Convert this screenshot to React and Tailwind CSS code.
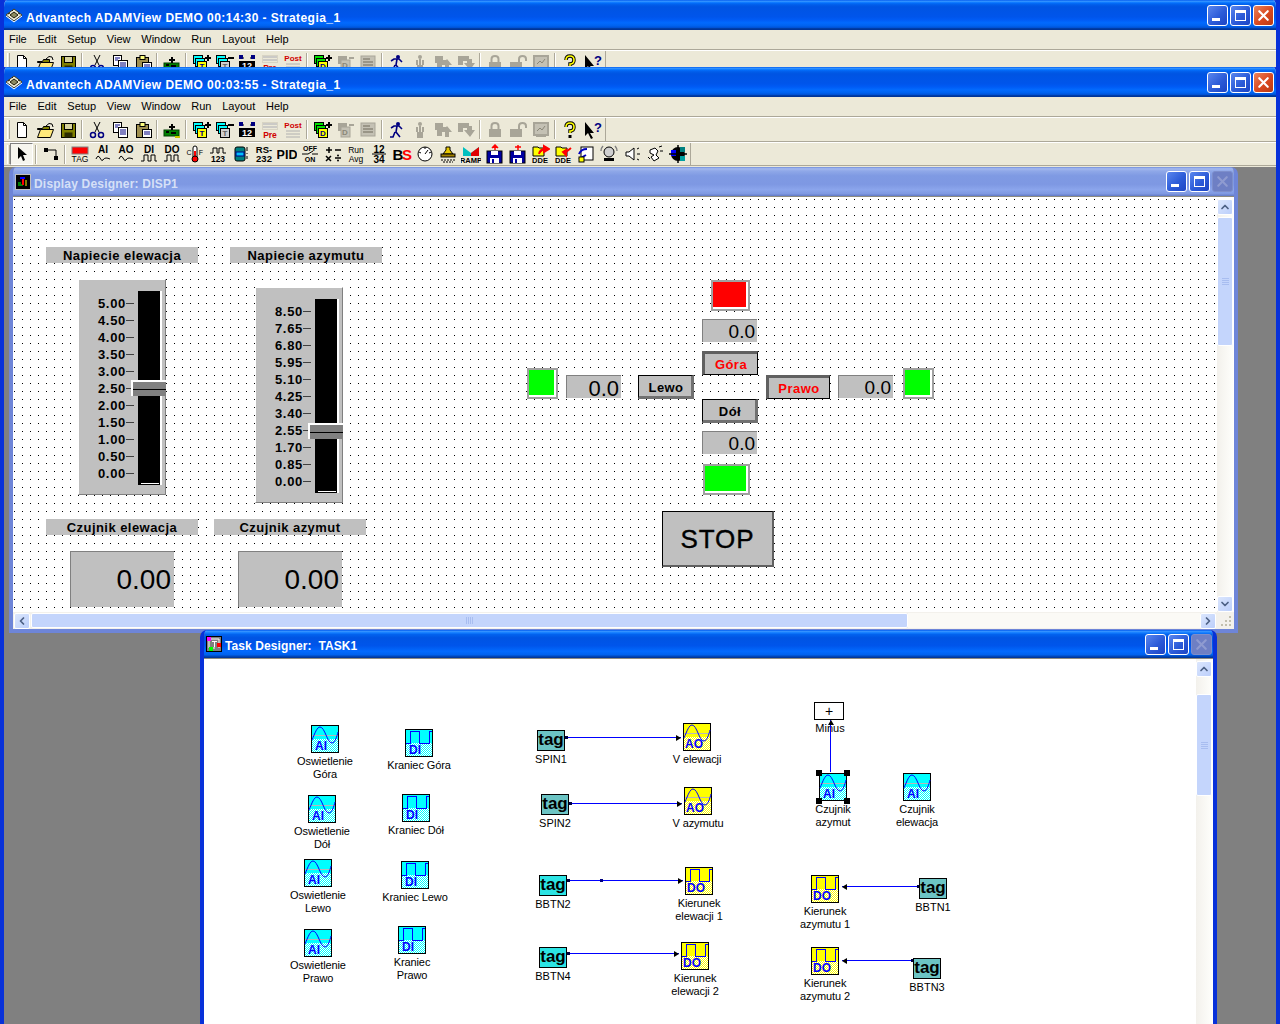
import { ChevronUp, ChevronDown, ChevronLeft, ChevronRight, X } from 'lucide-react'

const sans = '"Liberation Sans", Arial, sans-serif'

// small helpers for toolbar pictures
const Ico = ({ children }) => (
  <svg width="20" height="20" viewBox="0 0 20 20" className="block shrink-0">{children}</svg>
)
const T = ({ x = 10, y, s = 8, c = '#000', w = 700, a = 'middle', children }) => (
  <text x={x} y={y} fontSize={s} fill={c} fontWeight={w} textAnchor={a} fontFamily={sans}>{children}</text>
)
const Wave = ({ y = 15 }) => <path d={`M3 ${y}q2-5 4-1t3 2 3-2 4 1`} fill="none" stroke="#000" />
const Pulse = () => <path d="M2 17h3v-6h4v6h3v-6h4v6h2" fill="none" stroke="#000" />
const Gray = '#a8a598'

const Stack = ({ l, c = '#00ffff', box = '#ffff00', sign = 'plus' }) => (
  <Ico>
    <rect x="2.5" y="2.5" width="9" height="8" fill={c} stroke="#000" />
    <rect x="4.5" y="5.5" width="9" height="8" fill={c} stroke="#000" />
    <rect x="6.5" y="8.5" width="9" height="9" fill={box} stroke="#000" />
    <T x={11} y={16} s={8} c={box === '#ffff00' ? '#000080' : '#606060'}>{l}</T>
    <path d={sign === 'plus' ? 'M14 5h6M17 2v6' : 'M14 5h6'} stroke="#000" strokeWidth="2" />
  </Ico>
)
const Dde = ({ down }) => (
  <Ico>
    <path d="M3 3h5l1 1h5v8H3z" fill="#ffff00" stroke="#000" />
    <path d={down ? 'M18 4l-5 4h-3M10 8l3-2v5z' : 'M9 10q1-5 6-5M14 2l5 3-5 3z'} fill={down ? 'none' : '#ff0000'} stroke="#ff0000" strokeWidth="2" />
    <T y={19} s={7.5}>DDE</T>
  </Ico>
)
const Disk = ({ mark }) => (
  <Ico>
    <rect x="3" y="7" width="15" height="12" fill="#0000a0" stroke="#000" />
    <rect x="6" y="14" width="9" height="5" fill="#ffffff" />
    <rect x="8" y="15" width="2" height="4" fill="#0000a0" />
    <rect x="7" y="7" width="7" height="4" fill="#ffffff" />
    <path d={mark} fill="#ff0000" stroke="#ff0000" strokeWidth="1.5" />
  </Ico>
)

const icons = {
  new: <Ico><path d="M5.5 2.5h6l3 3v12h-9z" fill="#fff" stroke="#000" /><path d="M11.5 2.5v3h3" fill="none" stroke="#000" /></Ico>,
  open: <Ico><path d="M2.5 8.5h5l1-2h6v3h-12z" fill="#808000" stroke="#000" /><path d="M2.5 17.5l3-8h13l-3 8z" fill="#ffe97a" stroke="#000" /><path d="M11 6q3-4 6-2l1 3" fill="none" stroke="#000" /></Ico>,
  save: <Ico><rect x="3.5" y="3.5" width="14" height="14" fill="#808000" stroke="#000" /><rect x="6.5" y="3.5" width="8" height="6" fill="#d8d4a0" stroke="#000" /><rect x="6.5" y="12.5" width="8" height="5" fill="#2b2b00" /></Ico>,
  cut: <Ico><path d="M7 2l5 10M13 2L8 12" stroke="#000" fill="none" /><circle cx="6" cy="15" r="2.5" fill="none" stroke="#000080" strokeWidth="1.5" /><circle cx="14" cy="15" r="2.5" fill="none" stroke="#000080" strokeWidth="1.5" /></Ico>,
  copy: <Ico><rect x="3.5" y="2.5" width="8" height="10" fill="#fff" stroke="#000" /><rect x="8.5" y="7.5" width="9" height="10" fill="#fff" stroke="#000" /><path d="M5 5h5M5 7h3M10 10h6M10 12h6M10 14h6" stroke="#000080" /></Ico>,
  paste: <Ico><rect x="3.5" y="4.5" width="12" height="13" fill="#a09050" stroke="#000" /><rect x="7" y="2.5" width="5" height="4" fill="#ffff80" stroke="#000" /><rect x="9.5" y="9.5" width="9" height="8" fill="#fff" stroke="#000" /><path d="M11 12h6M11 14h6" stroke="#000080" /></Ico>,
  board: <Ico><rect x="2" y="10" width="15" height="6" fill="#008000" stroke="#004000" /><path d="M4 12h3M9 13h5" stroke="#000" strokeWidth="2" /><rect x="13" y="16" width="5" height="2" fill="#c8c800" /><path d="M7 7h6M10 4v6" stroke="#000" strokeWidth="2" /></Ico>,
  tplus: <Stack l="T" />,
  tminus: <Stack l="T" box="#d0d0d0" sign="minus" />,
  count: <Ico><path d="M2 5h5M13 5h5" stroke="#000" /><rect x="2" y="2" width="4" height="4" fill="#000080" /><rect x="14" y="2" width="4" height="4" fill="#000080" /><rect x="2" y="8" width="16" height="9" fill="#000" /><T y={16} s={9} c="#fff">12</T></Ico>,
  pre: <Ico><path d="M3 4h14M3 7h14" stroke="#c0c0c0" strokeWidth="1.5" /><rect x="2.5" y="2.5" width="15" height="7" fill="none" stroke="#d8d4c4" /><T y={18} s={8.5} c="#d00000">Pre</T></Ico>,
  post: <Ico><T y={8} s={8} c="#d00000">Post</T><path d="M3 11h14M3 14h14M3 17h14" stroke="#b0b0b0" /></Ico>,
  dplus: <Stack l="D" c="#00e000" />,
  dminus: <Ico><rect x="3" y="3" width="9" height="8" fill={Gray} /><rect x="6" y="7" width="9" height="10" fill="#c4c1b4" stroke={Gray} /><T x={10} y={15} s={8} c="#8a8778">D</T><path d="M14 5h5" stroke={Gray} strokeWidth="2" /></Ico>,
  dis: <Ico><rect x="3" y="3" width="14" height="13" fill="#c4c1b4" stroke={Gray} /><path d="M5 6h7M5 9h10M5 12h10" stroke="#8a8778" strokeWidth="1.5" /></Ico>,
  run: <Ico><circle cx="11" cy="4" r="2" fill="#000080" /><path d="M4 8l3-2h5l3 3M10 6l-1 6 4 5M8 12l-2 5H3" fill="none" stroke="#000080" strokeWidth="1.6" /></Ico>,
  man: <Ico><circle cx="10" cy="4" r="2" fill={Gray} /><path d="M10 6v12M7 7v5M13 7v5M8 18v-6M12 18v-6" stroke={Gray} strokeWidth="2" /></Ico>,
  up2: <Ico><path d="M2 3h8v4h3v5h-4v4H4V10H2z" fill={Gray} /><path d="M9 12l5-6 5 6h-3v5h-4v-5z" fill={Gray} /></Ico>,
  down2: <Ico><path d="M2 3h11v5H7v4H2z" fill={Gray} /><path d="M8 10h3V6h5v4h3l-5 7z" fill={Gray} /></Ico>,
  lock: <Ico><rect x="4" y="9" width="12" height="8" fill={Gray} /><path d="M6.5 9V6q0-3 3.5-3t3.5 3v3" fill="none" stroke={Gray} strokeWidth="2" /></Ico>,
  unlock: <Ico><rect x="2" y="9" width="12" height="8" fill={Gray} /><path d="M11 9V6q0-3 3.5-3T18 6v2" fill="none" stroke={Gray} strokeWidth="2" /></Ico>,
  chart: <Ico><rect x="3" y="3" width="14" height="12" fill="#c4c1b4" stroke={Gray} strokeWidth="2" /><path d="M6 11l3-3 2 2 3-4" fill="none" stroke="#8a8778" /><rect x="5" y="15" width="10" height="2" fill={Gray} /></Ico>,
  help: <Ico><path d="M6 7q0-4 4-4t4 4-4 4v2" fill="none" stroke="#000" strokeWidth="3.4" /><path d="M6 7q0-4 4-4t4 4-4 4v2" fill="none" stroke="#ffff00" strokeWidth="1.6" /><rect x="8.5" y="15" width="3" height="3" fill="#000" /></Ico>,
  whatis: <Ico><path d="M2 2v14l3-3 3 6 2-1-3-5h4z" fill="#000" /><T x={15} y={12} s={13} c="#000080">?</T></Ico>,

  pointer: <Ico><path d="M6 3v12l3-3 2 5 2-1-2-5h4z" fill="#000" /></Ico>,
  link: <Ico><rect x="3" y="4" width="4" height="4" fill="#000" /><rect x="13" y="12" width="4" height="4" fill="#000" /><path d="M5 6h10v7" fill="none" stroke="#000" /></Ico>,
  tag: <Ico><rect x="2" y="3" width="16" height="7" fill="#ff0000" stroke="#808080" /><T y={18} s={8.5} w={400}>TAG</T></Ico>,
  ai: <Ico><T y={9} s={10}>AI</T><Wave /></Ico>,
  ao: <Ico><T y={9} s={10}>AO</T><Wave /></Ico>,
  di: <Ico><T y={9} s={10}>DI</T><Pulse /></Ico>,
  do: <Ico><T y={9} s={10}>DO</T><Pulse /></Ico>,
  temp: <Ico><rect x="8" y="2" width="4" height="12" rx="2" fill="#fff" stroke="#000" /><rect x="9" y="7" width="2" height="8" fill="#ff0000" /><circle cx="10" cy="15" r="3" fill="#ff0000" stroke="#000" /><T x={4} y={11} s={7} w={400}>C</T><T x={16} y={11} s={7} w={400}>F</T></Ico>,
  n123: <Ico><path d="M2 9h3V4h4v5h2V4h4v5h3" fill="none" stroke="#000" /><T y={18} s={8.5}>123</T></Ico>,
  script: <Ico><rect x="4" y="3" width="10" height="14" rx="2" fill="#008080" stroke="#000" /><rect x="5" y="8" width="8" height="4" fill="#00c0ff" stroke="#000080" /><path d="M16 3v4M16 9v1M16 12v3" stroke="#000" /></Ico>,
  rs: <Ico><T y={9} s={9.5}>RS-</T><T y={18} s={9.5}>232</T></Ico>,
  pid: <Ico><T y={15} s={12.5}>PID</T></Ico>,
  off: <Ico><T y={7} s={7}>OFF</T><path d="M2 10h6l5-3M12 10h6" fill="none" stroke="#000" /><T y={18} s={7}>ON</T></Ico>,
  math: <Ico><path d="M3 6h6M6 3v6M12 6h6M3 12l5 5M8 12l-5 5M12 14h6" stroke="#000" strokeWidth="1.5" /><circle cx="15" cy="11.5" r="1" /><circle cx="15" cy="16.5" r="1" /></Ico>,
  runavg: <Ico><T y={9} s={8.5} w={400}>Run</T><T y={18} s={8.5} w={400}>Avg</T></Ico>,
  n1234: <Ico><T y={9} s={10}>12</T><path d="M3 10h14" stroke="#000" /><T y={19} s={10}>34</T></Ico>,
  bs: <Ico><T x={6} y={16} s={15}>B</T><T x={15} y={16} s={15} c="#ff0000">S</T></Ico>,
  gauge: <Ico><circle cx="10" cy="10" r="7" fill="#fff" stroke="#000" /><path d="M10 10l3-4M10 3v2M4 8l2 1M16 8l-2 1" stroke="#000" /></Ico>,
  stamp: <Ico><path d="M8 3h4v3l3 4H5l3-4z" fill="#e8c800" stroke="#000" /><rect x="3" y="10" width="14" height="3" fill="#a08000" stroke="#000" /><path d="M3 16h14M5 18h10" stroke="#000" strokeDasharray="2 1" /></Ico>,
  ramp: <Ico><path d="M2 3l8 6 8-6v9H2z" fill="#00c0c0" /><path d="M10 9l8-6v9h-8z" fill="#e00000" /><T y={19} s={7.5}>RAMP</T></Ico>,
  dup: <Disk mark="M11 1v5M8 4l3-3 3 3" />,
  ddown: <Disk mark="M11 1v5M8 3h6" />,
  ddeA: <Dde />,
  ddeB: <Dde down />,
  doc: <Ico><rect x="5" y="3" width="12" height="13" fill="#fff" stroke="#000" /><path d="M3 10q2-5 8-5M3 15l7-4" fill="none" stroke="#0000c0" strokeWidth="2" /><rect x="3" y="13" width="5" height="5" fill="#ffff00" stroke="#000" /></Ico>,
  alarm: <Ico><circle cx="10" cy="8" r="5" fill="#d0d0d0" stroke="#000" /><rect x="5" y="14" width="10" height="3" fill="#000" /><path d="M2 7q0-3 2-5M18 7q0-3-2-5" fill="none" stroke="#808080" strokeWidth="1.5" /></Ico>,
  sound: <Ico><path d="M4 8h3l5-4v12l-5-4H4z" fill="#fff" stroke="#000" /><path d="M15 5l2-1M15 10h3M15 15l2 1" stroke="#000" /></Ico>,
  anim: <Ico><path d="M5 6l5-2 3 3-2 4 3 3-5 3-3-4 3-2-4-2z" fill="#fff" stroke="#000" /><path d="M14 3l3-1M15 7h3M3 13l2 2" stroke="#000" /></Ico>,
  globe: <Ico><circle cx="10" cy="10" r="7" fill="#000" /><path d="M3 6h5v6H3z" fill="#0000ff" /><path d="M12 3h5v5h-5z" fill="#008080" /><path d="M12 12h5v5h-5z" fill="#00a0a0" /><path d="M10 1v18M1 10h18" stroke="#000" strokeWidth="1.5" /></Ico>,
}

const bar1 = ['new', 'open', 'save', '|', 'cut', 'copy', 'paste', '|', 'board', '|', 'tplus', 'tminus', 'count', 'pre', 'post', '|', 'dplus', 'dminus', 'dis', '|', 'run', 'man', 'up2', 'down2', '|', 'lock', 'unlock', 'chart', '|', 'help', 'whatis']
const bar2 = ['|', 'link', '|', 'tag', 'ai', 'ao', 'di', 'do', 'temp', 'n123', 'script', 'rs', 'pid', 'off', 'math', 'runavg', 'n1234', 'bs', 'gauge', 'stamp', 'ramp', 'dup', 'ddown', 'ddeA', 'ddeB', 'doc', 'alarm', 'sound', 'anim', 'globe']

function Toolbar({ items, children, className }) {
  return (
    <div className={`flex items-center pl-[3px] ${className}`}>
      <div className="w-[3px] h-[19px] border-l border-white border-r-[#aca899] border-r" />
      {children}
      {items.map((it, i) =>
        it === '|' ? (
          <div key={i} className="w-[2px] h-[19px] mx-[2px] border-l border-[#aca899] border-r border-r-white" />
        ) : (
          <div key={i} className="w-[23px] h-[22px] flex items-center justify-center">{icons[it]}</div>
        )
      )}
    </div>
  )
}

function CapBtn({ kind, close, dim }) {
  return (
    <div className={`w-[21px] h-[21px] rounded-[3px] border flex items-center justify-center relative ${dim ? 'border-[#7d8ecb] bg-[#6e7fc4]' : 'border-white'} ${!dim && close ? 'bg-[linear-gradient(135deg,#e9825a,#d9481f_55%,#b93a14)]' : ''} ${!dim && !close ? 'bg-[linear-gradient(135deg,#5a86ee,#2c5bd8_55%,#1c44c4)]' : ''}`}>
      {kind === 'min' && <div className="absolute left-[4px] bottom-[4px] w-[8px] h-[3px] bg-white" />}
      {kind === 'max' && <div className="w-[11px] h-[11px] border border-white border-t-[3px]" />}
      {kind === 'close' && <X size={17} strokeWidth={3} className={dim ? 'text-[#8f9bd0]' : 'text-white'} />}
    </div>
  )
}

const AppIcon = () => (
  <svg width="18" height="16" viewBox="0 0 18 16" className="shrink-0">
    <path d="M1 8l8-6 8 6-8 6z" fill="#f0ecd8" stroke="#403c20" />
    <path d="M5 8l4-3 4 3-4 3z" fill="#8c8a60" stroke="#201c08" />
    <path d="M3 7l2-1M13 6l2 1M7 3l1 1" stroke="#201c08" />
    <path d="M1 9l8 6 8-6" fill="none" stroke="#fff" />
  </svg>
)

function AppFrame({ time, className, children }) {
  return (
    <div className={`flex flex-col overflow-hidden bg-[#ece9d8] border-x-4 border-[#0831d9] rounded-t-[7px] ${className}`}>
      <div className="-mx-[4px] h-[30px] shrink-0 flex items-center pl-[5px] pr-[6px] gap-[3px] bg-[linear-gradient(180deg,#0058ee_0%,#3593ff_4%,#288eff_6%,#127dff_8%,#036ffc_10%,#0262ee_14%,#0057e5_20%,#0054e3_24%,#0055eb_56%,#005bf5_66%,#026afe_76%,#0062ef_86%,#0052d6_92%,#0040ab_94%,#003092_100%)]">
        <AppIcon />
        <span className="flex-1 pt-[5px] text-white font-bold text-[12px] tracking-[0.46px] whitespace-pre">{`Advantech ADAMView DEMO 00:${time} - Strategia_1`}</span>
        <div className="flex gap-[2px]">
          <CapBtn kind="min" />
          <CapBtn kind="max" />
          <CapBtn kind="close" close />
        </div>
      </div>
      <div className="h-[20px] shrink-0 flex items-center gap-[10.8px] pl-[5px] text-[11px] text-black border-b border-[#aca899]">
        {['File', 'Edit', 'Setup', 'View', 'Window', 'Run', 'Layout', 'Help'].map((m) => <span key={m}>{m}</span>)}
      </div>
      <div className="h-[1px] shrink-0 bg-white" />
      <Toolbar items={bar1} className="h-[23px] shrink-0 w-[602px] border-r border-[#aca899]" />
      {children}
    </div>
  )
}

const ScrollBtn = ({ Icon, className = '' }) => (
  <div className={`shrink-0 w-[16px] h-[16px] rounded-[2px] border border-white bg-[linear-gradient(135deg,#dbe6fd,#bccffb)] flex items-center justify-center text-[#4d6185] ${className}`}>
    <Icon size={12} strokeWidth={3.5} />
  </div>
)
const Grip = ({ v }) => (
  <div className={`flex items-center justify-center ${v ? 'flex-col gap-[1px]' : 'gap-[1px]'}`}>
    {[0, 1, 2, 3].map((i) => <div key={i} className={v ? 'w-[7px] h-[1px] bg-[#a8bdf0]' : 'w-[1px] h-[7px] bg-[#a8bdf0]'} />)}
  </div>
)

function MdiWindow({ pos, title, icon, active, children }) {
  return (
    <div className={`absolute flex flex-col rounded-t-[7px] overflow-hidden border-x-4 border-b-4 ${active ? 'border-[#0831d9]' : 'border-[#6e85d8]'} ${pos}`}>
      <div className={`-mx-[4px] shrink-0 flex items-center pl-[6px] pr-[5px] gap-[3px] ${active ? 'h-[28px] bg-[linear-gradient(180deg,#0058ee_0%,#3593ff_5%,#127dff_10%,#0262ee_16%,#0054e3_28%,#0055eb_56%,#026afe_76%,#0062ef_88%,#0040ab_96%,#003092_100%)]' : 'h-[29px] bg-[linear-gradient(180deg,#6f8ddc_0%,#a4b8ee_6%,#8fa8e8_14%,#7f9ae3_30%,#7e98e3_60%,#8ba5ec_78%,#7f99e2_92%,#6179c6_100%)]'}`}>
        {icon}
        <span className={`flex-1 font-bold text-[12px] whitespace-pre ${active ? 'pt-[3px] tracking-[0.1px] text-white' : 'pt-[5px] tracking-[0.2px] text-[#d6e0f7]'}`}>{title}</span>
        <div className="flex gap-[2px]">
          <CapBtn kind="min" />
          <CapBtn kind="max" />
          <CapBtn kind="close" dim />
        </div>
      </div>
      <div className="flex-1 min-h-0 flex flex-col bg-white border-t border-[#8d8b80]">{children}</div>
    </div>
  )
}

// Display Designer controls
const Raised = ({ children, className }) => (
  <div className={`absolute bg-[#c0c0c0] flex items-center justify-center pt-[1px] font-bold text-[13px] tracking-[0.45px] text-black ${className}`}>{children}</div>
)
const Readout = ({ className, size = 'text-[19px]', children }) => (
  <div className={`absolute bg-[#c0c0c0] border-l border-t border-[#808080] flex items-center justify-end pt-[2px] pr-[2px] text-black ${size} ${className}`}>{children}</div>
)
const Lamp = ({ className }) => (
  <div className={`absolute border-2 border-[#a0a0a0] ${className}`}>
    <div className="w-full h-full border-r-2 border-b-2 border-white" />
  </div>
)
const PushBtn = ({ pressed, red, className, children }) => (
  <div className={`absolute bg-[#c0c0c0] border border-black flex items-center justify-center font-bold text-[13px] tracking-[0.45px] ${pressed ? 'pt-[1px] border-l-[3px] border-t-[3px] border-l-[#606060] border-t-[#606060]' : 'pl-[2px] pt-[3px] border-r-[3px] border-b-[3px] border-r-[#707070] border-b-[#707070]'} ${red ? 'text-[#ff0000]' : 'text-black'} ${className}`}>{children}</div>
)

function Slider({ pos, values, thumb }) {
  return (
    <div className={`absolute bg-[#c0c0c0] border border-l-white border-t-white border-r-[#808080] border-b-[#808080] flex justify-end pt-[11px] pr-[3px] ${pos}`}>
      <div className="flex flex-col mt-[4px] mr-[4px] font-bold text-[13px] tracking-[0.7px] leading-[17px]">
        {values.map((v) => (
          <div key={v} className="h-[17px] flex items-center justify-end">
            <span>{v}</span>
            <div className="w-[8px] h-[1px] bg-[#404040]" />
          </div>
        ))}
      </div>
      <div className="relative w-[24px] h-[194px] bg-black border-r-2 border-white">
        <div className="absolute left-[3px] right-[1px] bottom-[1px] h-[1px] bg-white" />
      </div>
      <div className={`absolute left-[52px] w-[35px] h-[16px] bg-[#808080] border-l-2 border-t-2 border-white flex flex-col justify-center ${thumb}`}>
        <div className="h-[1px] bg-black" />
      </div>
    </div>
  )
}

const DisplayIcon = () => (
  <svg width="16" height="16" viewBox="0 0 16 16" className="shrink-0">
    <rect x="0.5" y="0.5" width="15" height="15" fill="#000" stroke="#c0c0c0" />
    <path d="M3 9h3M3 11h5" stroke="#00ff00" />
    <path d="M8 5v6" stroke="#ff0000" strokeWidth="2" />
    <path d="M5 4h5" stroke="#0000ff" strokeWidth="2" />
    <path d="M11 6v6" stroke="#ffff00" />
  </svg>
)
const TaskIcon = () => (
  <svg width="16" height="16" viewBox="0 0 16 16" className="shrink-0">
    <rect x="0.5" y="0.5" width="15" height="15" fill="#808080" stroke="#000" />
    <path d="M3 3h10v9M3 3v9h6" fill="none" stroke="#fff" />
    <rect x="1" y="1" width="4" height="4" fill="#ff00ff" />
    <rect x="11" y="7" width="4" height="4" fill="#ff0000" />
    <rect x="3" y="11" width="4" height="4" fill="#00ff00" />
    <path d="M6 5h5v1H9v5H8V6H6z" fill="#fff" />
  </svg>
)

// Task Designer nodes
const textX = { AI: 4, DI: 4, AO: 2, DO: 2 }

function NodeIcon({ kind, tint }) {
  const id = `dither-${tint}`
  const fill = tint === 'y' ? '#ffff00' : '#00ffff'
  const isWave = kind === 'AI' || kind === 'AO'
  return (
    <svg width="28" height="28" viewBox="0 0 28 28" className="block" shapeRendering="crispEdges">
      <defs>
        <pattern id={id} width="2" height="2" patternUnits="userSpaceOnUse">
          <rect width="2" height="2" fill="#fff" />
          <rect width="1" height="1" fill={fill} />
          <rect x="1" y="1" width="1" height="1" fill={fill} />
        </pattern>
      </defs>
      <rect x="0.5" y="0.5" width="27" height="27" fill={fill} stroke="#000" />
      <rect x="1" y="14" width="26" height="13" fill={`url(#${id})`} />
      {isWave ? (
        <g>
          <path d="M1 10.5h26" stroke="#b8b8b8" />
          <path d="M1 15C4 8 6 2 9 2C14 2 16 18 21 18C24 18 26 11 27 7" fill="none" stroke="#0000ff" shapeRendering="auto" />
        </g>
      ) : (
        <path d="M1 14.5H5.5V2.5H14.5V14.5H24.5V2.5H27" fill="none" stroke="#0000ff" />
      )}
      <text x={textX[kind]} y="25" fontSize="12" fontWeight="700" fill="#0000ff" fontFamily={sans}>{kind}</text>
    </svg>
  )
}

function Node({ pos, kind, tint = 'c', label, selected }) {
  return (
    <div className={`absolute w-[80px] flex flex-col items-center ${pos}`}>
      <div className="relative">
        <NodeIcon kind={kind} tint={tint} />
        {selected && ['-left-[3px] -top-[3px]', '-right-[3px] -top-[3px]', '-left-[3px] -bottom-[3px]', '-right-[3px] -bottom-[3px]'].map((c) => (
          <div key={c} className={`absolute w-[6px] h-[6px] bg-black ${c}`} />
        ))}
      </div>
      <div className="mt-[2px] text-[11px] leading-[13px] tracking-[-0.1px] text-center text-black whitespace-pre">{label}</div>
    </div>
  )
}

function Tag({ pos, label, grey }) {
  return (
    <div className={`absolute w-[80px] flex flex-col items-center ${pos}`}>
      <div className={`w-[28px] h-[21px] border border-black flex items-center justify-center font-bold text-[17px] leading-none pb-[3px] text-black ${grey ? 'bg-[#6cc4c4]' : 'bg-[#2ce4e4]'}`}>tag</div>
      <div className="mt-[2px] text-[11px] leading-[13px] text-black">{label}</div>
    </div>
  )
}

function Wire({ pos, reverse, mid }) {
  return (
    <div className={`absolute h-[1px] bg-[#0000ff] ${pos}`}>
      <div className={`absolute -top-[1px] w-[3px] h-[3px] bg-[#000040] ${reverse ? '-right-[1px]' : '-left-[1px]'}`} />
      <div className={`absolute -top-[2px] w-0 h-0 border-y-[3px] border-y-transparent ${reverse ? 'left-0 border-r-[5px] border-r-black' : 'right-0 border-l-[5px] border-l-black'}`} />
      {mid && <div className={`absolute -top-[1px] w-[3px] h-[3px] bg-[#000080] ${mid}`} />}
    </div>
  )
}

export default function App() {
  return (
    <div className="relative w-[1280px] h-[1024px] overflow-hidden flex flex-col bg-[#0831d9]" style={{ fontFamily: sans }}>
      <AppFrame time="14:30" className="h-[67px] shrink-0" />
      <AppFrame time="03:55" className="flex-1 min-h-0">
        <div className="h-[1px] shrink-0 bg-[#aca899]" />
        <div className="h-[1px] shrink-0 bg-white" />
        <Toolbar
          items={bar2}
          className="h-[22px] shrink-0 w-[687px] border-r border-[#aca899]"
        >
          <div className="w-[23px] h-[22px] flex items-center justify-center border border-[#808080] border-r-white border-b-white bg-[#f6f5ee]">{icons.pointer}</div>
        </Toolbar>
        <div className="h-[1px] shrink-0 bg-[#aca899]" />

        {/* MDI desktop */}
        <div className="relative flex-1 min-h-0 bg-[#808080] mt-[1px] overflow-hidden">
          <MdiWindow pos="left-[5px] top-0 w-[1229px] h-[466px]" title="Display Designer: DISP1" icon={<DisplayIcon />}>
            <div className="flex-1 min-h-0 flex pt-[2px] pl-[1px] pr-[1px]">
              <div className="relative flex-1 bg-white bg-[conic-gradient(at_1px_1px,#fff_75%,#000_0)] bg-[size:8px_8px] overflow-hidden">
                <Raised className="left-[32px] top-[48px] w-[152px] h-[16px]">Napiecie elewacja</Raised>
                <Raised className="left-[216px] top-[48px] w-[152px] h-[16px]">Napiecie azymutu</Raised>
                <Slider pos="left-[64px] top-[80px] w-[88px] h-[216px]" thumb="top-[100px]" values={['5.00', '4.50', '4.00', '3.50', '3.00', '2.50', '2.00', '1.50', '1.00', '0.50', '0.00']} />
                <Slider pos="left-[241px] top-[88px] w-[88px] h-[216px]" thumb="top-[135px]" values={['8.50', '7.65', '6.80', '5.95', '5.10', '4.25', '3.40', '2.55', '1.70', '0.85', '0.00']} />
                <Raised className="left-[32px] top-[320px] w-[152px] h-[16px]">Czujnik elewacja</Raised>
                <Raised className="left-[200px] top-[320px] w-[152px] h-[16px]">Czujnik azymut</Raised>
                <div className="absolute left-[56px] top-[352px] w-[104px] h-[56px] bg-[#c0c0c0] border-l border-t border-[#808080] flex items-center justify-end pr-[3px] text-[28px]">0.00</div>
                <div className="absolute left-[224px] top-[352px] w-[104px] h-[56px] bg-[#c0c0c0] border-l border-t border-[#808080] flex items-center justify-end pr-[3px] text-[28px]">0.00</div>

                <Lamp className="left-[697px] top-[81px] w-[39px] h-[31px] bg-[#ff0000]" />
                <Readout className="left-[688px] top-[120px] w-[55px] h-[23px]">0.0</Readout>
                <PushBtn pressed red className="left-[688px] top-[152px] w-[56px] h-[24px]">Góra</PushBtn>
                <PushBtn className="left-[624px] top-[176px] w-[56px] h-[24px]">Lewo</PushBtn>
                <PushBtn pressed red className="left-[752px] top-[176px] w-[64px] h-[24px]">Prawo</PushBtn>
                <PushBtn className="left-[688px] top-[200px] w-[56px] h-[24px]">Dół</PushBtn>
                <Readout className="left-[688px] top-[232px] w-[55px] h-[23px]">0.0</Readout>
                <Readout size="text-[22px]" className="left-[552px] top-[176px] w-[55px] h-[23px]">0.0</Readout>
                <Readout className="left-[824px] top-[176px] w-[55px] h-[23px]">0.0</Readout>
                <Lamp className="left-[513px] top-[169px] w-[31px] h-[31px] bg-[#00ff00]" />
                <Lamp className="left-[889px] top-[169px] w-[31px] h-[31px] bg-[#00ff00]" />
                <Lamp className="left-[689px] top-[265px] w-[47px] h-[31px] bg-[#00ff00]" />
                <div className="absolute left-[648px] top-[312px] w-[112px] h-[56px] bg-[#c0c0c0] border border-black border-r-[2px] border-b-[2px] border-r-[#606060] border-b-[#606060] flex items-center justify-center pt-[2px] text-[26px] tracking-[0.9px] [-webkit-text-stroke:0.4px_black]">STOP</div>
              </div>
              <div className="w-[16px] shrink-0 flex flex-col gap-[1px] bg-[linear-gradient(90deg,#f3f1ec,#fefefb)]">
                <ScrollBtn Icon={ChevronUp} />
                <div className="h-[129px] mt-[1px] rounded-[2px] border border-white bg-[#c4d5fc] flex items-center justify-center"><Grip v /></div>
                <div className="flex-1" />
                <ScrollBtn Icon={ChevronDown} />
              </div>
            </div>
            <div className="h-[17px] shrink-0 flex bg-[#f3f1ec] pt-[1px] pb-[1px] pl-[1px]">
              <ScrollBtn Icon={ChevronLeft} />
              <div className="w-[877px] ml-[1px] rounded-[2px] border border-white bg-[#c4d5fc] flex items-center justify-center"><Grip /></div>
              <div className="flex-1 bg-[#fbfaf6]" />
              <ScrollBtn Icon={ChevronRight} />
              <div className="w-[18px] shrink-0 relative">
                <div className="absolute right-[3px] bottom-[2px] w-[2px] h-[2px] bg-[#c2bfae]" />
                <div className="absolute right-[7px] bottom-[2px] w-[2px] h-[2px] bg-[#c2bfae]" />
                <div className="absolute right-[11px] bottom-[2px] w-[2px] h-[2px] bg-[#c2bfae]" />
                <div className="absolute right-[3px] bottom-[6px] w-[2px] h-[2px] bg-[#c2bfae]" />
                <div className="absolute right-[7px] bottom-[6px] w-[2px] h-[2px] bg-[#c2bfae]" />
                <div className="absolute right-[3px] bottom-[10px] w-[2px] h-[2px] bg-[#c2bfae]" />
              </div>
            </div>
          </MdiWindow>

          <MdiWindow active pos="left-[196px] top-[463px] w-[1017px] h-[440px]" title="Task Designer:  TASK1" icon={<TaskIcon />}>
            <div className="flex-1 min-h-0 flex pl-[1px]">
              <div className="relative flex-1 bg-white overflow-hidden">
                <Wire pos="left-[361px] top-[78px] w-[115px]" />
                <Wire pos="left-[365px] top-[144px] w-[112px]" />
                <Wire pos="left-[363px] top-[221px] w-[115px]" mid="left-[32px]" />
                <Wire pos="left-[363px] top-[294px] w-[111px]" />
                <Wire reverse pos="left-[637px] top-[227px] w-[77px]" />
                <Wire reverse pos="left-[637px] top-[301px] w-[71px]" />

                <Node pos="left-[80px] top-[66px]" kind="AI" label={'Oswietlenie\nGóra'} />
                <Node pos="left-[174px] top-[70px]" kind="DI" label="Kraniec Góra" />
                <Node pos="left-[77px] top-[136px]" kind="AI" label={'Oswietlenie\nDół'} />
                <Node pos="left-[171px] top-[135px]" kind="DI" label="Kraniec Dół" />
                <Node pos="left-[73px] top-[200px]" kind="AI" label={'Oswietlenie\nLewo'} />
                <Node pos="left-[170px] top-[202px]" kind="DI" label="Kraniec Lewo" />
                <Node pos="left-[73px] top-[270px]" kind="AI" label={'Oswietlenie\nPrawo'} />
                <Node pos="left-[167px] top-[267px]" kind="DI" label={'Kraniec\nPrawo'} />

                <Tag grey pos="left-[306px] top-[71px]" label="SPIN1" />
                <Tag grey pos="left-[310px] top-[135px]" label="SPIN2" />
                <Tag pos="left-[308px] top-[216px]" label="BBTN2" />
                <Tag pos="left-[308px] top-[288px]" label="BBTN4" />
                <Tag grey pos="left-[688px] top-[219px]" label="BBTN1" />
                <Tag grey pos="left-[682px] top-[299px]" label="BBTN3" />

                <Node pos="left-[452px] top-[64px]" kind="AO" tint="y" label="V elewacji" />
                <Node pos="left-[453px] top-[128px]" kind="AO" tint="y" label="V azymutu" />
                <Node pos="left-[454px] top-[208px]" kind="DO" tint="y" label={'Kierunek\nelewacji 1'} />
                <Node pos="left-[450px] top-[283px]" kind="DO" tint="y" label={'Kierunek\nelewacji 2'} />
                <Node pos="left-[580px] top-[216px]" kind="DO" tint="y" label={'Kierunek\nazymutu 1'} />
                <Node pos="left-[580px] top-[288px]" kind="DO" tint="y" label={'Kierunek\nazymutu 2'} />

                <div className="absolute left-[609px] top-[43px] w-[30px] h-[18px] border border-black bg-white flex items-center justify-center text-[14px] leading-none">+</div>
                <div className="absolute left-[585px] top-[63px] w-[80px] text-center text-[11px] leading-[13px]">Minus</div>
                <div className="absolute left-[625px] top-[61px] w-[1px] h-[52px] bg-[#0000ff]" />
                <div className="absolute left-[623px] top-[61px] w-0 h-0 border-x-[3px] border-x-transparent border-b-[5px] border-b-black" />
                <Node selected pos="left-[588px] top-[114px]" kind="AI" label={'Czujnik\nazymut'} />
                <Node pos="left-[672px] top-[114px]" kind="AI" label={'Czujnik\nelewacja'} />
              </div>
              <div className="w-[16px] mr-[1px] shrink-0 flex flex-col gap-[1px] bg-[linear-gradient(90deg,#f3f1ec,#fefefb)] pt-[2px] pb-[2px]">
                <ScrollBtn Icon={ChevronUp} />
                <div className="h-[15px]" />
                <div className="h-[102px] rounded-[2px] border border-white bg-[#c4d5fc] flex items-center justify-center"><Grip v /></div>
                <div className="flex-1" />
                <ScrollBtn Icon={ChevronDown} />
              </div>
            </div>
          </MdiWindow>
        </div>
      </AppFrame>
    </div>
  )
}
